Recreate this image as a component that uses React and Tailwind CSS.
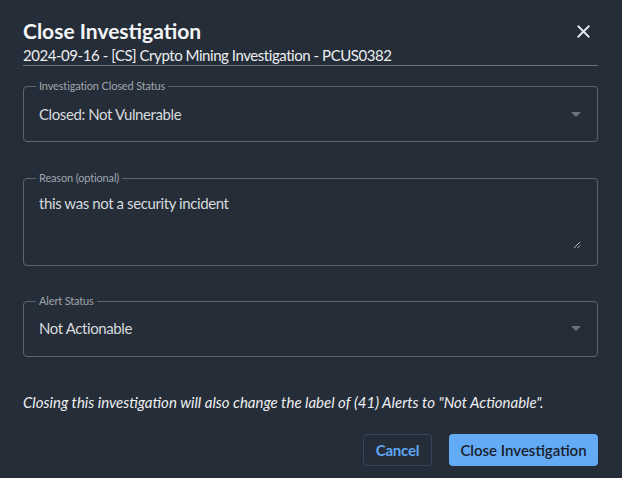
import { X } from 'lucide-react'

function Caret() {
  return (
    <svg width="10" height="5" viewBox="0 0 10 5" className="shrink-0">
      <path d="M0 0 L10 0 L5 5 Z" fill="#6b7480" />
    </svg>
  )
}

function Field({ label, children, className }) {
  return (
    <fieldset className={`relative rounded-[4px] border border-[#5d6570] pl-[12px] pr-[16px] ${className}`}>
      <legend className="px-[3px] text-[11px] leading-[16px] tracking-[-0.15px] text-[#a0a6ae]">{label}</legend>
      {children}
    </fieldset>
  )
}

export default function App() {
  return (
    <div className="w-[622px] h-[478px] bg-[#252d38] pl-[23px] pr-[24px] pt-[17px] font-['Lato',sans-serif]">
      <div className="flex items-start justify-between">
        <h1 className="text-[21px] font-bold leading-[28px] text-[#f4f5f6]">Close Investigation</h1>
        <X size={21} strokeWidth={2.1} className="mt-[4px] mr-[4px] text-[#e8eaed]" />
      </div>
      <div className="border-b border-[#6b727c] text-[15px] leading-[20px] tracking-[-0.45px] text-[#eceef0]">
        2024-09-16 - [CS] Crypto Mining Investigation - PCUS0382
      </div>

      <Field label="Investigation Closed Status" className="mt-[12px] h-[64px]">
        <div className="flex items-center justify-between pl-[3px] pt-[8px]">
          <span className="text-[15px] leading-[24px] tracking-[-0.4px] text-[#d7dade]">Closed: Not Vulnerable</span>
          <Caret />
        </div>
      </Field>

      <Field label="Reason (optional)" className="mt-[28px] h-[96px]">
        <div className="pl-[3px] pt-[5px] text-[15px] leading-[24px] tracking-[-0.4px] text-[#d7dade]">
          this was not a security incident
        </div>
        <svg width="8" height="8" viewBox="0 0 8 8" className="absolute right-[16px] bottom-[16px]">
          <path d="M7 1 L1 7 M7 4.5 L4.5 7" stroke="#b4b9bf" strokeWidth="1" />
        </svg>
      </Field>

      <Field label="Alert Status" className="mt-[27px] h-[64px]">
        <div className="flex items-center justify-between pl-[3px] pt-[7px]">
          <span className="text-[15px] leading-[24px] tracking-[-0.4px] text-[#d7dade]">Not Actionable</span>
          <Caret />
        </div>
      </Field>

      <p className="mt-[33px] text-[15px] italic leading-[24px] text-[#eef0f2]">
        Closing this investigation will also change the label of (41) Alerts to "Not Actionable".
      </p>

      <div className="mt-[20px] flex justify-end gap-[17px]">
        <button className="h-[32px] w-[69px] rounded-[4px] border border-[#34475d] text-[15px] font-bold tracking-[-0.2px] text-[#5ea6f2]">
          Cancel
        </button>
        <button className="h-[32px] w-[149px] rounded-[4px] bg-[#64abf6] text-[15px] font-semibold tracking-[0px] text-[#18202b]">
          Close Investigation
        </button>
      </div>
    </div>
  )
}
